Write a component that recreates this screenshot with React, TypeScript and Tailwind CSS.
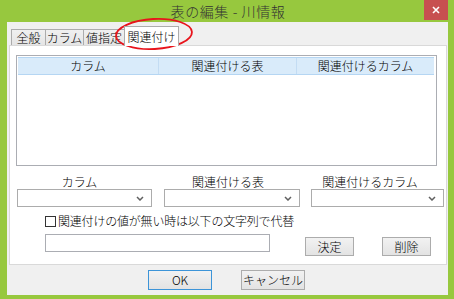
import React from 'react';

const font = { fontFamily: '"Noto Sans CJK JP", "Noto Sans", sans-serif' };

const Chevron: React.FC = () => (
  <svg width="8" height="5" viewBox="0 0 8 5" className="shrink-0">
    <polyline points="1,1 4,4 7,1" fill="none" stroke="#606060" strokeWidth="1.5" />
  </svg>
);

const Select: React.FC<{ width: string }> = ({ width }) => (
  <div className={`${width} h-[18px] bg-white border border-[#acacac] flex items-center justify-end pr-[7px]`}>
    <Chevron />
  </div>
);

const Button: React.FC<{ label: string; primary?: boolean; className?: string }> = ({ label, primary, className }) => (
  <div
    className={`${className ?? ''} flex items-center justify-center bg-gradient-to-b from-[#f2f2f2] to-[#e3e3e3] border ${
      primary ? 'border-[#3c94d8]' : 'border-[#acacac]'
    } text-[12px] text-black leading-none`}
  >
    {label}
  </div>
);

const tabs = [
  { label: '全般', w: 'w-[35px]' },
  { label: 'カラム', w: 'w-[39px]' },
  { label: '値指定', w: 'w-[42px]' },
];

export default function App() {
  return (
    <div className="w-[454px] h-[299px] bg-[#97c83e] flex flex-col overflow-hidden text-black font-light" style={font}>
      {/* title bar */}
      <div className="relative h-[22px] shrink-0 flex items-center justify-center">
        <span className="text-[14px] text-[#333] leading-none tracking-[0.6px] pl-[2px]">表の編集 - 川情報</span>
        <div className="absolute right-[6px] top-0 w-[24px] h-[20px] bg-[#c75050] flex items-center justify-center">
          <svg width="8" height="8" viewBox="0 0 8 8">
            <path d="M1 1 L7 7 M7 1 L1 7" stroke="#fff" strokeWidth="1.6" />
          </svg>
        </div>
      </div>

      {/* client */}
      <div className="relative flex-1 ml-[7px] mr-[6px] mb-[4px] bg-[#f0f0f0] flex flex-col">
        {/* tabs */}
        <div className="flex items-end h-[23px] pl-[4px] shrink-0">
          {tabs.map((t) => (
            <div
              key={t.label}
              className={`${t.w} h-[16px] -mr-px border border-b-0 border-[#acacac] bg-gradient-to-b from-[#f0f0f0] to-[#e5e5e5] flex items-center justify-center text-[12px] leading-none`}
            >
              {t.label}
            </div>
          ))}
          <div className="w-[55px] h-[20px] -mb-px relative z-10 border border-b-0 border-[#acacac] bg-white flex items-center justify-center text-[12px] leading-none">
            関連付け
          </div>
        </div>

        {/* tab panel */}
        <div className="ml-[2px] mr-[1px] h-[220px] shrink-0 bg-white border border-[#d9d9d9] flex flex-col">
          {/* list */}
          <div className="mt-[9px] ml-[6px] w-[421px] h-[111px] border border-[#abadb3] pt-px pl-px pr-[2px]">
            <div className="h-[18px] bg-[#d9ebfa] border-y border-[#b5d6f3] flex text-[12px] leading-none">
              <div className="w-[141px] flex items-center justify-center border-r border-[#c3dcf3]">カラム</div>
              <div className="w-[138px] flex items-center justify-center border-r border-[#c3dcf3]">関連付ける表</div>
              <div className="flex-1 flex items-center justify-center">関連付けるカラム</div>
            </div>
          </div>

          {/* labels */}
          <div className="mt-[8px] h-[15px] flex items-center text-[12px] leading-none">
            <div className="ml-[7px] w-[125px] text-center">カラム</div>
            <div className="ml-[23px] w-[126px] text-center">関連付ける表</div>
            <div className="ml-[15px] w-[128px] text-center">関連付けるカラム</div>
          </div>

          {/* selects */}
          <div className="h-[18px] flex">
            <div className="ml-[7px]">
              <Select width="w-[135px]" />
            </div>
            <div className="ml-[12px]">
              <Select width="w-[136px]" />
            </div>
            <div className="ml-[11px]">
              <Select width="w-[133px]" />
            </div>
          </div>

          {/* checkbox */}
          <div className="mt-[7px] h-[14px] flex items-center ml-[35px]">
            <div className="w-[11px] h-[11px] border border-[#333] bg-white shrink-0" />
            <span className="ml-[2px] text-[12px] leading-none tracking-[-0.2px]">関連付けの値が無い時は以下の文字列で代替</span>
          </div>

          {/* input + buttons */}
          <div className="mt-[6px] flex items-start">
            <div className="ml-[35px] w-[225px] h-[18px] border border-[#abadb3] bg-white" />
            <Button label="決定" className="ml-[35px] mt-[3px] w-[49px] h-[19px]" />
            <Button label="削除" className="ml-[28px] mt-[3px] w-[49px] h-[19px]" />
          </div>
        </div>

        {/* dialog buttons */}
        <div className="mt-[5px] flex">
          <Button label="OK" primary className="ml-[141px] w-[64px] h-[20px]" />
          <Button label="キャンセル" className="ml-[29px] w-[64px] h-[20px]" />
        </div>

        {/* red annotation ellipse */}
        <svg className="absolute left-[106px] top-[-6px] pointer-events-none" width="82" height="36" viewBox="0 0 82 36">
          <ellipse cx="41" cy="18" rx="38" ry="15" fill="none" stroke="#e8141c" strokeWidth="1.8" transform="rotate(-3 41 18)" />
        </svg>
      </div>
    </div>
  );
}
